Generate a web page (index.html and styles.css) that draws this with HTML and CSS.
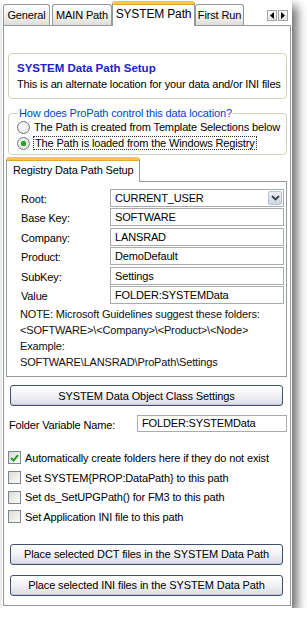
FILE: index.html
```html
<!DOCTYPE html>
<html>
<head>
<meta charset="utf-8">
<link rel="stylesheet" href="styles.css">
</head>
<body>
<div class="window">
  <div class="tabstrip">
    <div class="tab t-general">General</div>
    <div class="tab t-main">MAIN Path</div>
    <div class="tab tab-sel t-system">SYSTEM Path</div>
    <div class="tab t-first">First Run</div>
    <div class="scroller">
      <span class="sbtn"><svg width="6" height="7" viewBox="0 0 6 7"><path d="M5 0 L1 3.5 L5 7 Z" fill="#000"/></svg></span>
      <span class="sbtn"><svg width="6" height="7" viewBox="0 0 6 7"><path d="M1 0 L5 3.5 L1 7 Z" fill="#000"/></svg></span>
    </div>
  </div>
  <div class="tabbody">
    <div class="group info">
      <div class="title">SYSTEM Data Path Setup</div>
      <div class="desc">This is an alternate location for your data and/or INI files</div>
    </div>

    <fieldset class="group choice">
      <legend>How does ProPath control this data location?</legend>
      <div class="radio-row"><span class="radio"></span><span>The Path is created from Template Selections below</span></div>
      <div class="radio-row"><span class="radio on"></span><span class="focus">The Path is loaded from the Windows Registry</span></div>
    </fieldset>

    <div class="subtabs">
      <div class="subtab">Registry Data Path Setup</div>
    </div>
    <div class="subpanel">
      <div class="fields">
        <span class="lbl">Root:</span>
        <div class="inp combo"><span>CURRENT_USER</span><span class="dd"><svg width="9" height="6" viewBox="0 0 9 6"><path d="M1 1 L4.5 4.5 L8 1" fill="none" stroke="#3a3f4a" stroke-width="1.8"/></svg></span></div>
        <span class="lbl">Base Key:</span>
        <div class="inp">SOFTWARE</div>
        <span class="lbl">Company:</span>
        <div class="inp">LANSRAD</div>
        <span class="lbl">Product:</span>
        <div class="inp">DemoDefault</div>
        <span class="lbl">SubKey:</span>
        <div class="inp">Settings</div>
        <span class="lbl">Value</span>
        <div class="inp">FOLDER:SYSTEMData</div>
      </div>
      <div class="notes">
        <div>NOTE: Microsoft Guidelines suggest these folders:</div>
        <div>&lt;SOFTWARE&gt;\&lt;Company&gt;\&lt;Product&gt;\&lt;Node&gt;</div>
        <div>Example:</div>
        <div>SOFTWARE\LANSRAD\ProPath\Settings</div>
      </div>
    </div>

    <button class="btn btn-first">SYSTEM Data Object Class Settings</button>

    <div class="folder-row">
      <span class="flbl">Folder Variable Name:</span>
      <div class="inp finp">FOLDER:SYSTEMData</div>
    </div>

    <div class="checks">
      <div class="check-row"><span class="cbox on"><svg width="9" height="8" viewBox="0 0 9 8"><path d="M1 4 L3.5 6.5 L8 1.2" fill="none" stroke="#21a121" stroke-width="2"/></svg></span><span>Automatically create folders here if they do not exist</span></div>
      <div class="check-row"><span class="cbox"></span><span>Set SYSTEM{PROP:DataPath} to this path</span></div>
      <div class="check-row"><span class="cbox"></span><span>Set ds_SetUPGPath() for FM3 to this path</span></div>
      <div class="check-row"><span class="cbox"></span><span>Set Application INI file to this path</span></div>
    </div>

    <button class="btn btn-dct">Place selected DCT files in the SYSTEM Data Path</button>
    <button class="btn btn-ini">Place selected INI files in the SYSTEM Data Path</button>
  </div>
</div>
</body>
</html>
```
FILE: styles.css
```css
* { box-sizing: border-box; }
html, body { margin: 0; padding: 0; background: #fff; }
body {
  font-family: "Liberation Sans", Arial, sans-serif;
  font-size: 11px;
  letter-spacing: -0.15px;
  color: #000;
  white-space: nowrap;
}
.window {
  margin-left: 2px;
  width: 290px;
  height: 608px;
  background: #fff;
  box-shadow: 5px 6px 10px rgba(0, 0, 0, 0.6);
  padding: 0 1px;
  display: flex;
  flex-direction: column;
}
.tabstrip {
  height: 25px;
  display: flex;
  align-items: flex-end;
}
.tab {
  height: 21px;
  border: 1px solid #919b9c;
  border-bottom: none;
  border-radius: 3px 3px 0 0;
  background: linear-gradient(#ffffff, #ecece6 70%, #dedcd6);
  padding-top: 4px;
  text-align: center;
  margin-right: 2px;
}
.t-general { width: 47px; }
.t-main { width: 60px; margin-right: 0; }
.t-system { width: 83px; margin-right: 0; }
.t-first { width: 49px; }
.tab-sel {
  height: 25px;
  background: #fff;
  border-top: 3px solid #ffc83c;
  box-shadow: inset 0 1px 0 #e6a43a;
  padding-top: 3px;
  font-size: 12px;
  position: relative;
  margin-bottom: -1px;
  z-index: 2;
}
.scroller {
  margin-left: auto;
  margin-right: 3px;
  align-self: flex-start;
  margin-top: 10px;
  display: flex;
  gap: 1px;
}
.sbtn {
  width: 10px;
  height: 11px;
  border: 1px solid #a4a4a4;
  background: linear-gradient(#fff, #e4e4e4);
  display: flex;
  align-items: center;
  justify-content: center;
}
.tabbody {
  flex: 1;
  border: 1px solid #919b9c;
  padding: 27px 3px 0 4px;
  display: flex;
  flex-direction: column;
  margin-bottom: 2px;
}
.group {
  border: 1px solid #d0d0bf;
  border-radius: 4px;
}
.info {
  height: 46px;
  padding: 6px 0 0 8px;
}
.title {
  color: #1b22c9;
  font-weight: bold;
  font-size: 11.5px;
  letter-spacing: 0;
  line-height: 16px;
}
.desc { line-height: 16px; }
.choice {
  margin: 8px 0 0 0;
  padding: 0 0 3px 8px;
  min-width: 0;
}
.choice legend {
  color: #0046d5;
  padding: 0 1px;
  margin-left: 1px;
  line-height: 12px;
}
.radio-row {
  display: flex;
  align-items: center;
  gap: 4px;
  height: 16px;
}
.radio {
  width: 13px;
  height: 13px;
  border-radius: 50%;
  border: 1px solid #6c7684;
  background: radial-gradient(circle at 40% 35%, #fff, #dcdcd6);
  display: inline-flex;
  align-items: center;
  justify-content: center;
  flex: none;
}
.radio.on::after {
  content: "";
  width: 5px;
  height: 5px;
  border-radius: 50%;
  background: #1ea01e;
  box-shadow: 0 0 1px #5fd35f;
}
.focus {
  outline: 1px dotted #333;
  padding: 0 1px;
}
.subtabs {
  margin: 2px 0 0 -2px;
  display: flex;
}
.subtab {
  width: 134px;
  height: 25px;
  border: 1px solid #919b9c;
  border-bottom: none;
  border-top: 3px solid #ffc83c;
  box-shadow: inset 0 1px 0 #e6a43a;
  border-radius: 3px 3px 0 0;
  background: #fff;
  padding: 4px 0 0 6px;
  margin-bottom: -1px;
  position: relative;
  z-index: 1;
}
.subpanel {
  border: 1px solid #919b9c;
  margin: 0 0 0 -2px;
  height: 196px;
  padding: 7px 3px 0 14px;
}
.fields {
  display: grid;
  grid-template-columns: 89px 174px;
  grid-auto-rows: 18px;
  row-gap: 1.4px;
  align-items: center;
}
.lbl { padding-top: 2px; }
.inp {
  height: 18px;
  border: 1px solid #a7abb0;
  background: #fff;
  padding: 2px 0 0 4px;
}
.combo {
  display: flex;
  align-items: center;
  justify-content: space-between;
  padding: 0 1px 0 4px;
}
.dd {
  width: 14px;
  height: 14px;
  border: 1px solid #b9c2d3;
  border-radius: 2px;
  background: linear-gradient(#eef1f8, #cfd5e4);
  display: flex;
  align-items: center;
  justify-content: center;
}
.notes {
  margin-top: 2px;
  margin-left: -1px;
  line-height: 16px;
  color: #111;
}
.btn {
  font-family: inherit;
  font-size: 11px;
  letter-spacing: -0.1px;
  color: #000;
  height: 21px;
  margin: 0 4px 0 2px;
  border: 1px solid #3f4f6e;
  border-radius: 3px;
  background: linear-gradient(#ffffff, #f1f1f5 50%, #dadbe4);
  box-shadow: inset 0 -1px 0 #c6c8d6;
  padding: 0;
}
.btn-first { margin-top: 8px; }
.folder-row {
  display: flex;
  align-items: center;
  margin-top: 8px;
  height: 18px;
  padding-left: 1px;
}
.flbl { width: 128px; padding-top: 4px; }
.finp {
  width: 150px;
  height: 17px;
  padding: 1px 0 0 4px;
}
.checks {
  margin-top: 16px;
  display: flex;
  flex-direction: column;
}
.check-row {
  height: 19.7px;
  display: flex;
  align-items: center;
  gap: 4px;
}
.cbox {
  width: 13px;
  height: 13px;
  border: 1px solid #7d8794;
  background: linear-gradient(135deg, #dcdcd6, #fbfbf9);
  display: inline-flex;
  align-items: center;
  justify-content: center;
  flex: none;
}
.btn-dct { margin-top: 17px; }
.btn-ini { margin-top: 10px; }
```
